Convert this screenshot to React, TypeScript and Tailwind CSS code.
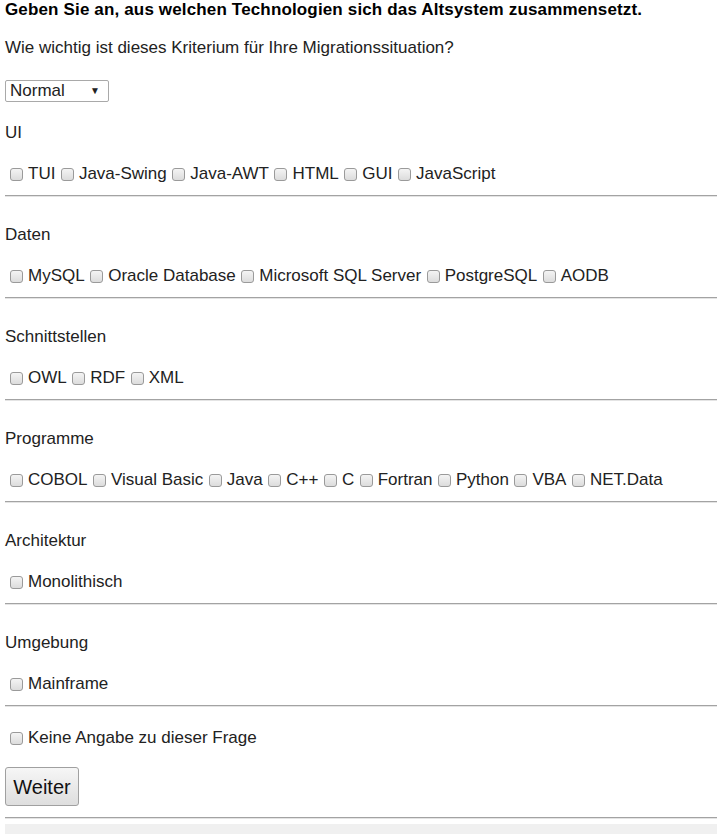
import React from 'react';

const sections: { label: string; options: string[] }[] = [
  { label: 'UI', options: ['TUI', 'Java-Swing', 'Java-AWT', 'HTML', 'GUI', 'JavaScript'] },
  { label: 'Daten', options: ['MySQL', 'Oracle Database', 'Microsoft SQL Server', 'PostgreSQL', 'AODB'] },
  { label: 'Schnittstellen', options: ['OWL', 'RDF', 'XML'] },
  { label: 'Programme', options: ['COBOL', 'Visual Basic', 'Java', 'C++', 'C', 'Fortran', 'Python', 'VBA', 'NET.Data'] },
  { label: 'Architektur', options: ['Monolithisch'] },
  { label: 'Umgebung', options: ['Mainframe'] },
];

function Box() {
  return (
    <span className="inline-block w-[13px] h-[13px] rounded-[3px] border border-[#9a9a9a] bg-gradient-to-b from-[#f4f4f4] to-[#dcdcdc] shrink-0" />
  );
}

function Option({ text }: { text: string }) {
  return (
    <span className="inline-flex items-center">
      <Box />
      <span className="ml-[5px] mr-[5.5px]">{text}</span>
    </span>
  );
}

function Rule() {
  return <div className="border-t border-b border-t-[#a3a3a3] border-b-[#e4e4e4]" />;
}

export default function App() {
  return (
    <div className="w-[722px] h-[834px] overflow-hidden bg-white px-[5px] text-[17px] leading-[20px] text-[#222]" style={{ fontFamily: '"Liberation Sans", Arial, sans-serif' }}>
      <div className="font-bold text-black tracking-[0.15px]">Geben Sie an, aus welchen Technologien sich das Altsystem zusammensetzt.</div>
      <div className="mt-[18px]">Wie wichtig ist dieses Kriterium für Ihre Migrationssituation?</div>
      <div className="mt-[22px] w-[104px] h-[22px] border border-[#a9a9a9] rounded-[2px] flex items-center justify-between pl-[4px] pr-[8px]">
        <span>Normal</span>
        <span className="text-[10px]">▼</span>
      </div>

      {sections.map((s, i) => (
        <div key={s.label} className={i === 0 ? 'mt-[21px]' : 'mt-[28px]'}>
          <div>{s.label}</div>
          <div className="mt-[21px] pl-[5px] flex items-center">
            {s.options.map((o) => (
              <Option key={o} text={o} />
            ))}
          </div>
          <div className="mt-[11px]">
            <Rule />
          </div>
        </div>
      ))}

      <div className="mt-[21px] pl-[5px] flex items-center">
        <Option text="Keine Angabe zu dieser Frage" />
      </div>
      <button className="mt-[19px] w-[74px] h-[39px] border border-[#a0a0a0] rounded-[3px] bg-gradient-to-b from-[#f6f6f6] to-[#dedede] text-[20px] text-[#111]">
        Weiter
      </button>
      <div className="mt-[11px]">
        <Rule />
      </div>
      <div className="mt-[5px] h-[12px] bg-[#f0f0f0]" />
    </div>
  );
}
